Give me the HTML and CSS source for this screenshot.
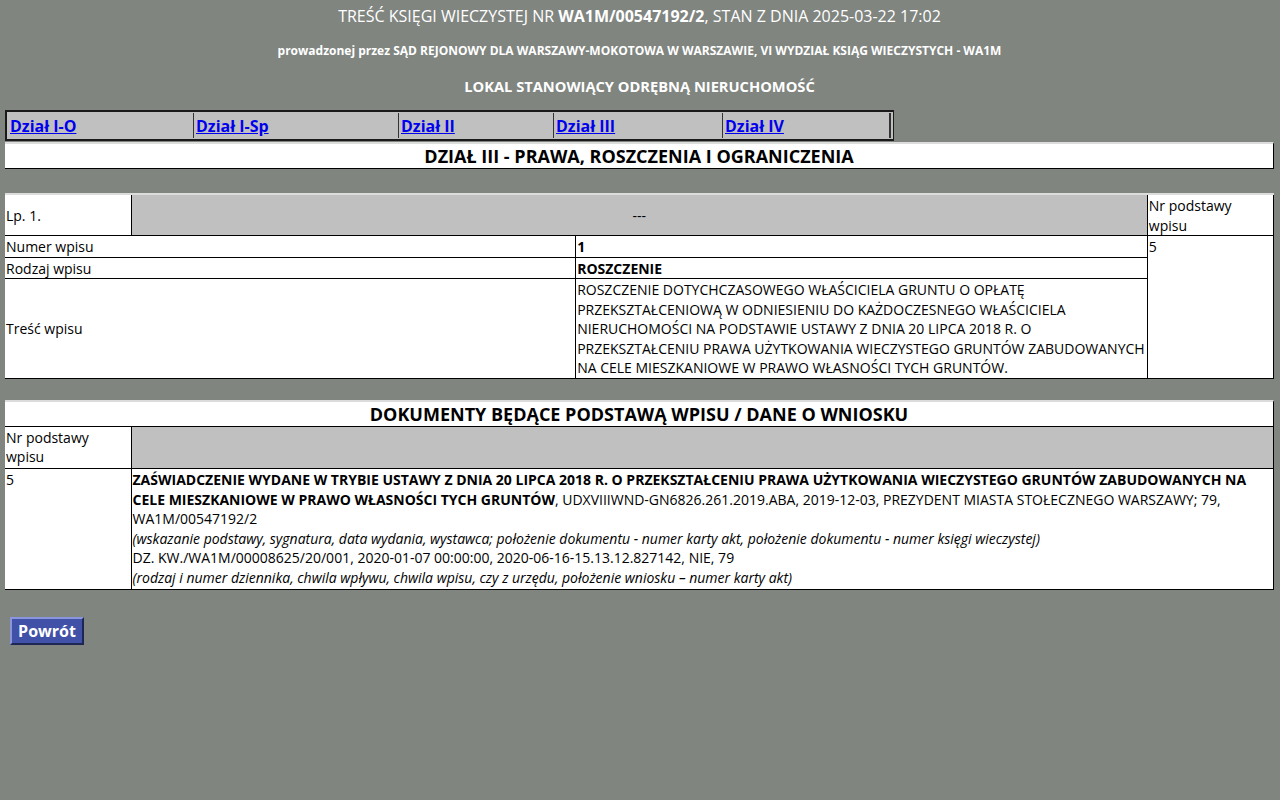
FILE: index.html
```html
<!DOCTYPE html>
<html lang="pl">
<head>
<meta charset="utf-8">
<title>Treść księgi wieczystej</title>
<link rel="stylesheet" href="styles.css">
</head>
<body>
<div class="page">
  <header class="head">
    <div class="title">TREŚĆ KSIĘGI WIECZYSTEJ NR <b>WA1M/00547192/2</b>, STAN Z DNIA 2025-03-22 17:02</div>
    <div class="court">prowadzonej przez SĄD REJONOWY DLA WARSZAWY-MOKOTOWA W WARSZAWIE, VI WYDZIAŁ KSIĄG WIECZYSTYCH - WA1M</div>
    <div class="kind">LOKAL STANOWIĄCY ODRĘBNĄ NIERUCHOMOŚĆ</div>
  </header>

  <nav class="tabs">
    <a class="tab t1" href="#">Dział I-O</a>
    <a class="tab t2" href="#">Dział I-Sp</a>
    <a class="tab t3" href="#">Dział II</a>
    <a class="tab t4" href="#">Dział III</a>
    <a class="tab t5" href="#">Dział IV</a>
  </nav>

  <div class="section-title">DZIAŁ III - PRAWA, ROSZCZENIA I OGRANICZENIA</div>

  <table class="grid entry">
    <colgroup><col class="c1"><col class="c2"><col class="c3"><col class="c4"></colgroup>
    <tr>
      <td>Lp. 1.</td>
      <td colspan="2" class="gray center">---</td>
      <td>Nr podstawy wpisu</td>
    </tr>
    <tr>
      <td colspan="2">Numer wpisu</td>
      <td><b>1</b></td>
      <td rowspan="3" class="top">5</td>
    </tr>
    <tr>
      <td colspan="2">Rodzaj wpisu</td>
      <td><b>ROSZCZENIE</b></td>
    </tr>
    <tr>
      <td colspan="2">Treść wpisu</td>
      <td>ROSZCZENIE DOTYCHCZASOWEGO WŁAŚCICIELA GRUNTU O OPŁATĘ PRZEKSZTAŁCENIOWĄ W ODNIESIENIU DO KAŻDOCZESNEGO WŁAŚCICIELA NIERUCHOMOŚCI NA PODSTAWIE USTAWY Z DNIA 20 LIPCA 2018 R. O PRZEKSZTAŁCENIU PRAWA UŻYTKOWANIA WIECZYSTEGO GRUNTÓW ZABUDOWANYCH NA CELE MIESZKANIOWE W PRAWO WŁASNOŚCI TYCH GRUNTÓW.</td>
    </tr>
  </table>

  <div class="section-title docs-title">DOKUMENTY BĘDĄCE PODSTAWĄ WPISU / DANE O WNIOSKU</div>
  <table class="grid docs">
    <colgroup><col class="c1"><col></colgroup>
    <tr>
      <td>Nr podstawy wpisu</td>
      <td class="gray"></td>
    </tr>
    <tr>
      <td class="top">5</td>
      <td><b>ZAŚWIADCZENIE WYDANE W TRYBIE USTAWY Z DNIA 20 LIPCA 2018 R. O PRZEKSZTAŁCENIU PRAWA UŻYTKOWANIA WIECZYSTEGO GRUNTÓW ZABUDOWANYCH NA CELE MIESZKANIOWE W PRAWO WŁASNOŚCI TYCH GRUNTÓW</b>, UDXVIIIWND-GN6826.261.2019.ABA, 2019-12-03, PREZYDENT MIASTA STOŁECZNEGO WARSZAWY; 79, WA1M/00547192/2<br>
      <i>(wskazanie podstawy, sygnatura, data wydania, wystawca; położenie dokumentu - numer karty akt, położenie dokumentu - numer księgi wieczystej)</i><br>
      DZ. KW./WA1M/00008625/20/001, 2020-01-07 00:00:00, 2020-06-16-15.13.12.827142, NIE, 79<br>
      <i>(rodzaj i numer dziennika, chwila wpływu, chwila wpisu, czy z urzędu, położenie wniosku – numer karty akt)</i></td>
    </tr>
  </table>

  <div class="actions">
    <button class="btn" type="button">Powrót</button>
  </div>
</div>
</body>
</html>
```

FILE: styles.css
```css
html, body {
  margin: 0;
  padding: 0;
  background: #80857f;
}
body {
  font-family: "Open Sans", "Liberation Sans", sans-serif;
  font-size: 14px;
  color: #000;
}
.page {
  padding: 0 6px 0 5px;
}
.head {
  text-align: center;
  color: #fff;
}
.title {
  font-size: 16px;
  line-height: 22px;
  padding-top: 5px;
}
.court {
  font-size: 12px;
  font-weight: bold;
  line-height: 17px;
  margin-top: 15px;
}
.kind {
  font-size: 14.667px;
  font-weight: bold;
  line-height: 20px;
  margin-top: 17px;
}

.tabs {
  display: flex;
  width: 884px;
  margin-top: 14px;
  border: 2px solid #1a1a1a;
  border-right-width: 1px;
  background: #c0c0c0;
  padding: 1px;
  height: 25px;
}
.tab {
  display: block;
  box-sizing: border-box;
  height: 25px;
  line-height: 26px;
  padding-left: 2px;
  font-weight: bold;
  font-size: 16px;
  color: #0000ee;
  text-decoration: underline;
  border-right: 1px solid #333;
}
.t1 { width: 186px; }
.t2 { width: 205px; }
.t3 { width: 155px; }
.t4 { width: 169px; }
.t5 { width: 168px; border-right: 2px solid #333; }

.section-title {
  margin-top: 1px;
  background: #fff;
  border-top: 2px solid #dcdcdc;
  border-bottom: 1px solid #000;
  border-right: 1px solid #000;
  text-align: center;
  font-weight: bold;
  font-size: 18px;
  line-height: 24px;
}
.docs-title {
  margin-top: 21px;
}

.grid {
  width: 100%;
  table-layout: fixed;
  border-collapse: collapse;
  background: #fff;
}
.grid td {
  border: 1px solid #000;
  padding: 1px 1px 0;
  line-height: 19.5px;
  vertical-align: middle;
  text-align: left;
}
.grid tr > td:first-child {
  border-left: 0;
}
.entry {
  margin-top: 24px;
  border-top: 2px solid #dcdcdc;
}
.entry tr:first-child td {
  border-top: 0;
}
.docs tr:first-child td {
  border-top: 0;
}
.grid.docs td {
  padding: 1px 1px 1.5px;
}
col.c1 { width: 126px; }
col.c2 { width: 444px; }
col.c3 { width: 571px; }
col.c4 { width: 126px; }
.grid td.gray {
  background: #c0c0c0;
}
.grid td.center {
  text-align: center;
}
.grid td.top {
  vertical-align: top;
}

.actions {
  padding: 27px 0 0 5px;
}
.btn {
  font-family: "Open Sans", "Liberation Sans", sans-serif;
  font-size: 16px;
  font-weight: bold;
  color: #fff;
  background: #4151a8;
  border: 2px solid;
  border-color: #8a96dc #1e2656 #1e2656 #8a96dc;
  padding: 0 5px;
  height: 28px;
  width: 74px;
  line-height: 22px;
  cursor: pointer;
}
```
